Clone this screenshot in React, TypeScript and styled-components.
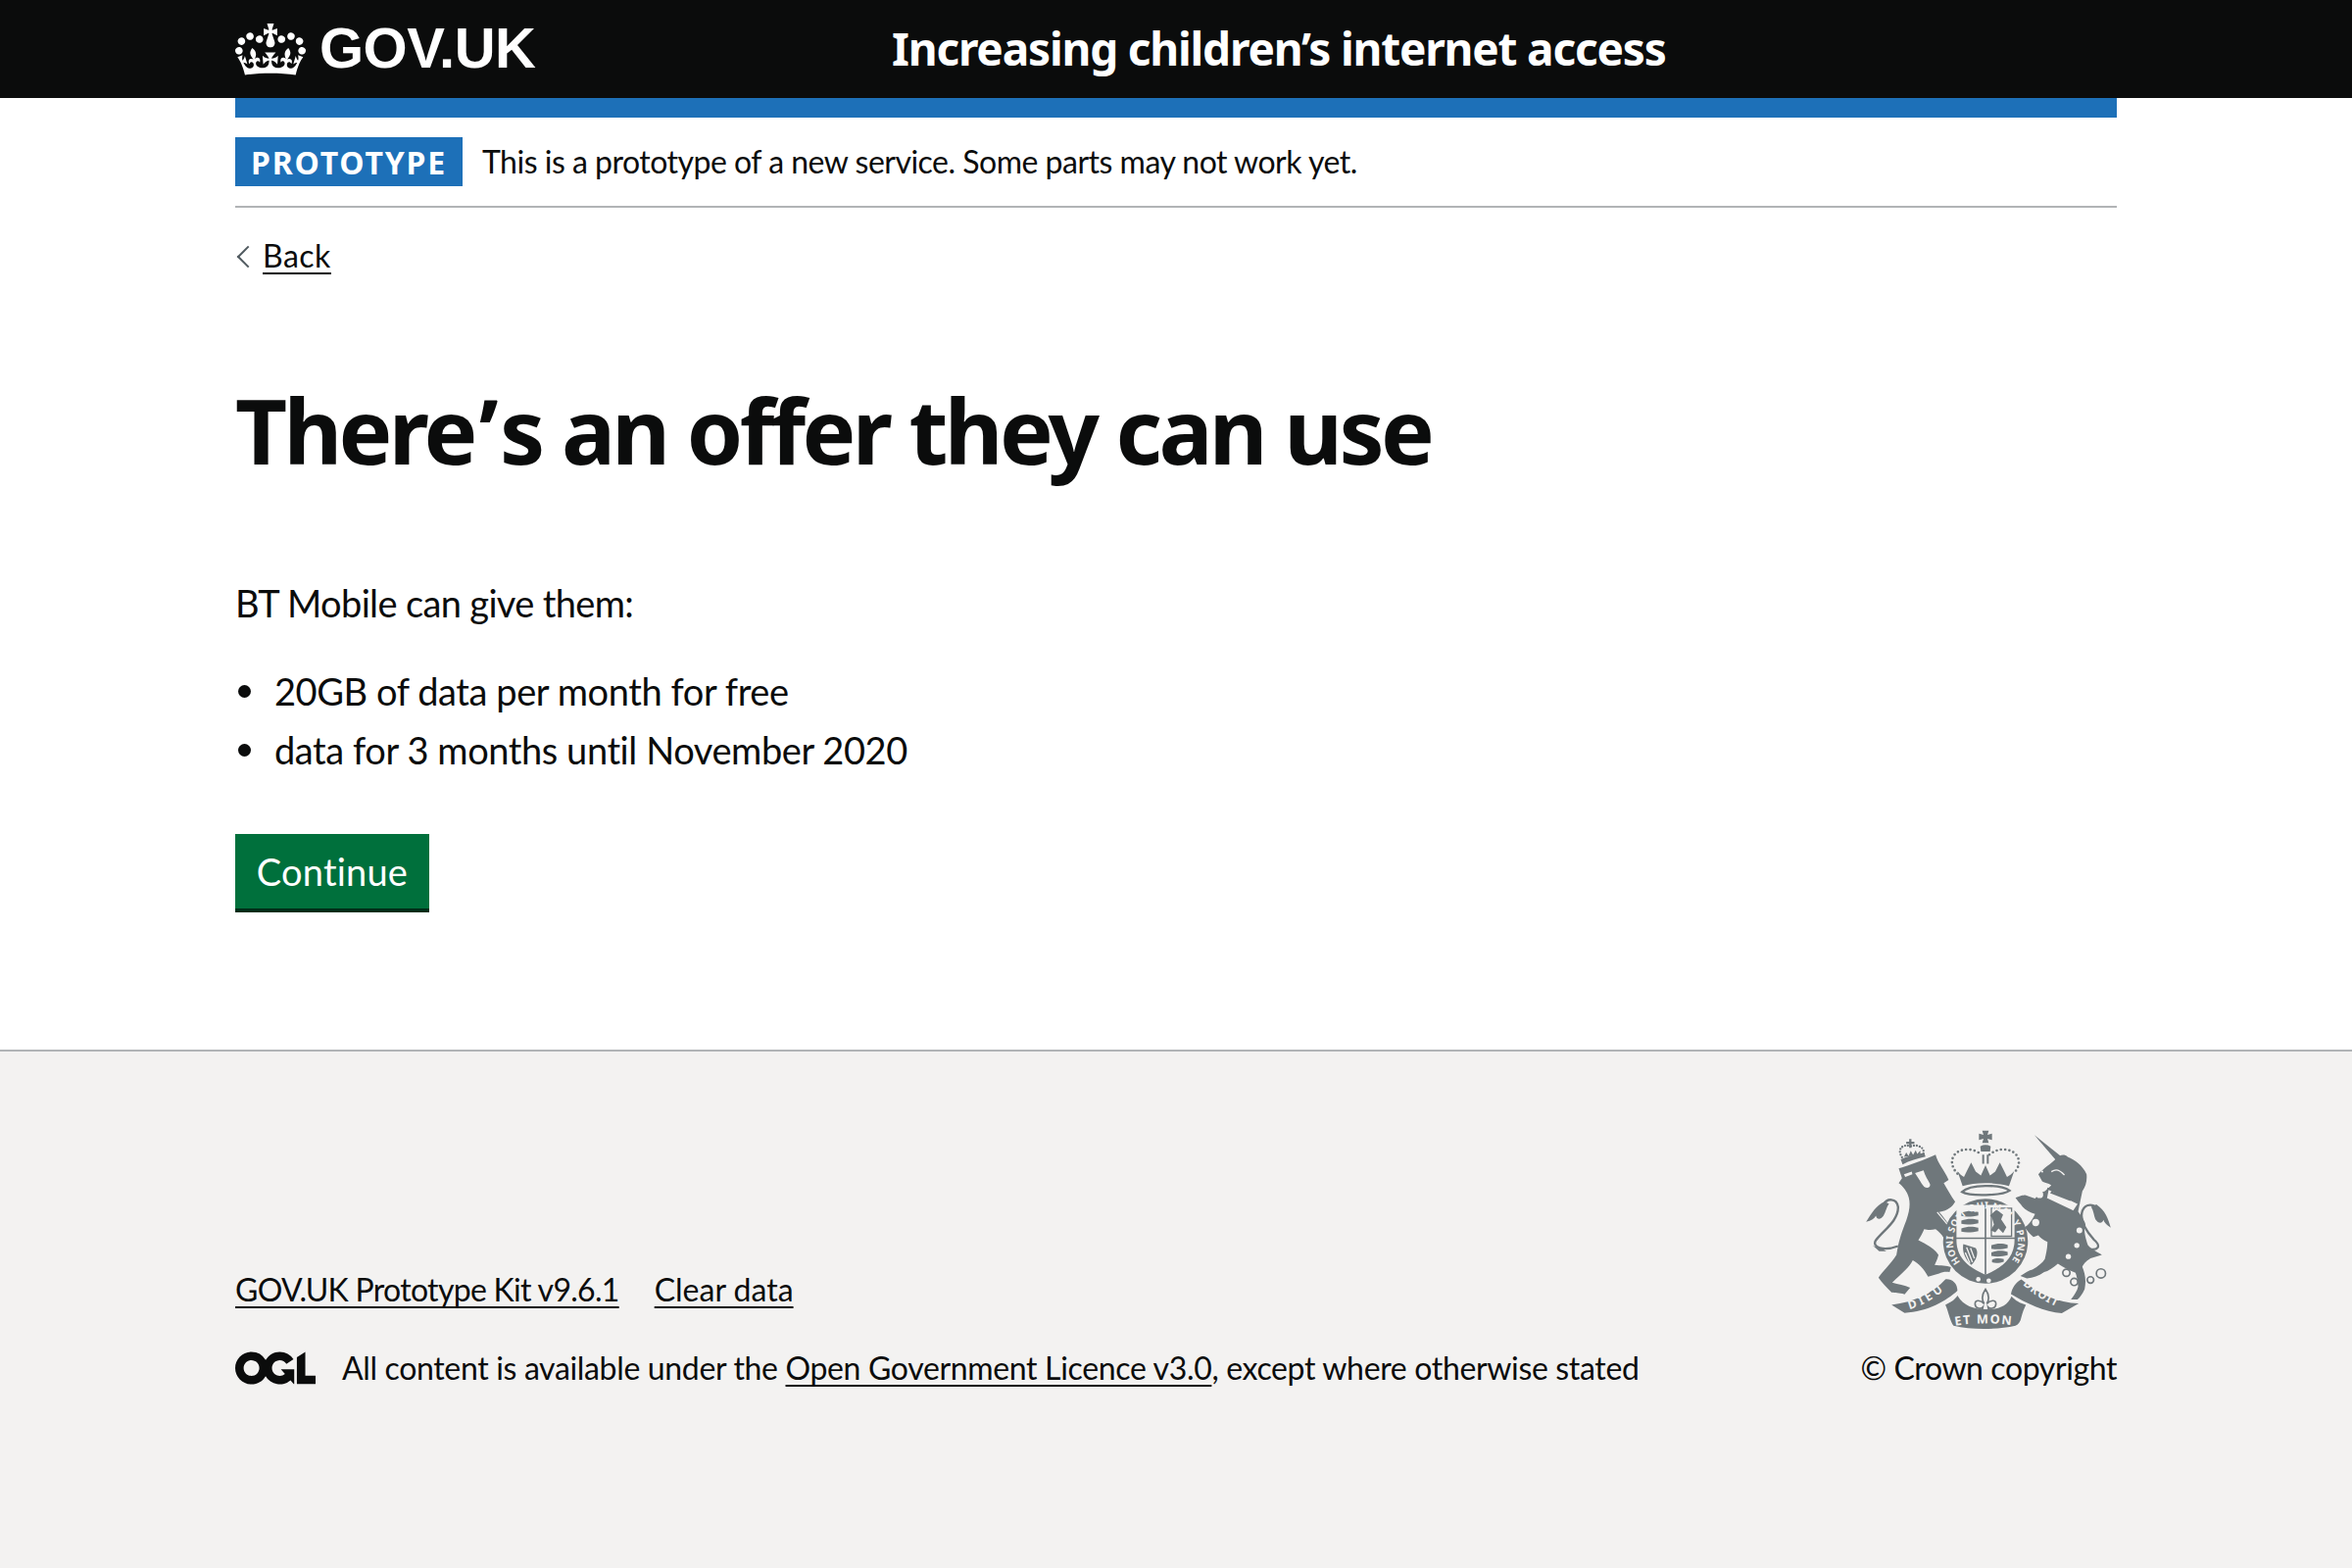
import React from 'react';
import styled, { createGlobalStyle } from 'styled-components';

const FONT = 'Lato, "Noto Sans", Arial, sans-serif';
const BOLD_FONT = '"Noto Sans", Arial, sans-serif';
const CREST = '#6f777b';
const FOOTER_BG = '#f3f2f1';

const GlobalStyle = createGlobalStyle`
  html, body { margin: 0; padding: 0; background: #fff; }
  body { font-family: ${FONT}; color: #0b0c0c; font-variant-ligatures: none; }
`;

const Page = styled.div`
  display: flex;
  flex-direction: column;
  height: 1600px;
  overflow: hidden;
`;

const Header = styled.header`
  background: #0b0c0c;
  height: 100px;
`;

const Container = styled.div`
  width: 1920px;
  margin: 0 auto;
`;

const HeaderInner = styled(Container)`
  display: flex;
  align-items: center;
  height: 100px;
`;

const Logo = styled.a`
  display: flex;
  align-items: center;
  width: 670px;
  color: #fff;
  font-size: 58px;
  font-weight: 700;
  font-family: "Liberation Sans", Arial, sans-serif;
  letter-spacing: -0.5px;
  span { margin-top: -3px; }
  svg { margin-right: 14px; }
`;

const ServiceName = styled.div`
  color: #fff;
  font-family: ${BOLD_FONT};
  font-size: 46px;
  font-weight: 700;
  letter-spacing: -1.2px;
  margin-top: -2px;
  white-space: nowrap;
`;

const BlueBar = styled.div`
  height: 20px;
  background: #1d70b8;
`;

const PhaseBanner = styled.div`
  display: flex;
  align-items: center;
  height: 90px;
  border-bottom: 2px solid #b1b4b6;
  box-sizing: content-box;
`;

const Tag = styled.strong`
  display: flex;
  align-items: center;
  justify-content: center;
  width: 232px;
  height: 50px;
  background: #1d70b8;
  color: #fff;
  font-family: ${BOLD_FONT};
  font-size: 32px;
  font-weight: 700;
  letter-spacing: 1.8px;
  margin-right: 20px;
`;

const PhaseText = styled.span`
  font-size: 32px;
  letter-spacing: -0.5px;
  padding-bottom: 2px;
`;

const BackLink = styled.a`
  position: relative;
  display: inline-block;
  margin-top: 27px;
  padding-left: 28px;
  font-size: 32px;
  line-height: 44px;
  letter-spacing: 0.5px;
  &::before {
    content: '';
    position: absolute;
    left: 5px;
    top: 15px;
    width: 14px;
    height: 14px;
    border-left: 2px solid #505a5f;
    border-bottom: 2px solid #505a5f;
    transform: rotate(45deg);
  }
  span { text-decoration: underline; text-decoration-thickness: 2px; text-underline-offset: 5px; }
`;

const Heading = styled.h1`
  margin: 96px 0 0;
  font-family: ${BOLD_FONT};
  font-size: 92px;
  line-height: 120px;
  font-weight: 700;
  letter-spacing: -3.65px;
  span { margin: 0 5px; }
`;

const Body = styled.p`
  margin: 91px 0 0;
  font-size: 38px;
  line-height: 50px;
  letter-spacing: -0.65px;
`;

const BulletList = styled.ul`
  margin: 40px 0 0;
  padding: 0 0 0 40px;
  list-style: none;
  font-size: 38px;
  line-height: 50px;
  letter-spacing: -0.42px;
`;

const Bullet = styled.li`
  position: relative;
  margin-bottom: 10px;
  &::before {
    content: '';
    position: absolute;
    left: -37px;
    top: 19px;
    width: 13px;
    height: 13px;
    border-radius: 50%;
    background: #0b0c0c;
  }
`;

const Button = styled.button`
  display: block;
  margin-top: 61px;
  width: 198px;
  height: 76px;
  padding: 0;
  border: 0;
  background: #00703c;
  box-shadow: 0 4px 0 #002d18;
  color: #fff;
  font-family: ${FONT};
  font-size: 38px;
  font-variant-ligatures: none;
  letter-spacing: 0.2px;
  margin-bottom: 144px;
`;

const Footer = styled.footer`
  flex: 1;
  background: ${FOOTER_BG};
  border-top: 2px solid #b1b4b6;
`;

const FooterInner = styled(Container)`
  display: flex;
  justify-content: space-between;
  align-items: flex-end;
  padding-top: 76px;
`;

const FooterMeta = styled.div`
  font-size: 32px;
  line-height: 42px;
`;

const FooterLinks = styled.div`
  display: flex;
  gap: 36px;
  margin-bottom: 38px;
`;

const FooterLink = styled.a<{ $tracking?: number }>`
  letter-spacing: ${p => p.$tracking ?? -0.34}px;
  text-decoration: underline;
  text-decoration-thickness: 2px;
  text-underline-offset: 5px;
`;

const Licence = styled.div`
  display: flex;
  align-items: center;
  gap: 27px;
  letter-spacing: -0.34px;
`;

const CopyrightBlock = styled.div`
  display: flex;
  flex-direction: column;
  align-items: flex-end;
  font-size: 32px;
  line-height: 42px;
  letter-spacing: -0.4px;
  svg { display: block; margin-bottom: 13px; }
`;

const CrownLogo = () => (
  <svg width="72" height="53" viewBox="0 0 132 97" fill="#fff" aria-hidden="true">
    <path d="M25 30.2c3.5 1.5 7.7-.2 9.1-3.7 1.5-3.6-.2-7.8-3.9-9.2-3.6-1.4-7.6.3-9.1 3.9-1.4 3.5.3 7.5 3.9 9zM9 39.5c3.6 1.5 7.8-.2 9.2-3.7 1.5-3.6-.2-7.8-3.9-9.1-3.6-1.5-7.6.2-9.1 3.8-1.4 3.5.3 7.5 3.8 9zM4.4 57.2c3.5 1.5 7.7-.2 9.1-3.8 1.5-3.6-.2-7.7-3.9-9.1-3.5-1.5-7.6.3-9.1 3.8-1.4 3.5.3 7.6 3.9 9.1zm38.3-21.4c3.5 1.5 7.7-.2 9.1-3.8 1.5-3.6-.2-7.7-3.9-9.1-3.6-1.5-7.6.3-9.1 3.8-1.3 3.6.4 7.7 3.9 9.1zm64.4-5.6c-3.6 1.5-7.8-.2-9.1-3.7-1.5-3.6.2-7.8 3.8-9.2 3.6-1.4 7.7.3 9.2 3.9 1.3 3.5-.4 7.5-3.9 9zm15.9 9.3c-3.6 1.5-7.7-.2-9.1-3.7-1.5-3.6.2-7.8 3.7-9.1 3.6-1.5 7.7.2 9.2 3.8 1.5 3.5-.3 7.5-3.8 9zm4.7 17.7c-3.6 1.5-7.8-.2-9.2-3.8-1.5-3.6.2-7.7 3.9-9.1 3.6-1.5 7.7.3 9.2 3.8 1.3 3.5-.4 7.6-3.9 9.1zM89.3 35.8c-3.6 1.5-7.8-.2-9.2-3.8-1.4-3.6.2-7.7 3.9-9.1 3.6-1.5 7.7.3 9.2 3.8 1.4 3.6-.3 7.7-3.9 9.1zM69.7 17.7l8.9 4.7V9.3l-8.9 2.8c-.2-.3-.5-.6-.9-.9L72.4 0H59.6l3.5 11.2c-.3.3-.6.5-.9.9l-8.8-2.8v13.1l8.8-4.7c.3.3.6.7.9.9l-5 15.4v.1c-.2.8-.4 1.6-.4 2.4 0 4.1 3.1 7.5 7 8.1h.2c.3 0 .7.1 1 .1.4 0 .7 0 1-.1h.2c4-.6 7.1-4.1 7.1-8.1 0-.8-.1-1.7-.4-2.4V34l-5.1-15.4c.4-.2.7-.6 1-.9zM66 92.8c16.9 0 32.8 1.1 47.1 3.2 4-16.9 8.9-26.7 14-33.5l-9.6-3.4c1 4.9 1.1 7.2 0 10.2-1.5-1.4-3-4.3-4.2-8.7L108.6 76c2.8-2 5-3.2 7.5-3.3-4.4 9.4-10 11.9-13.6 11.2-4.3-.8-6.3-4.6-5.6-7.9 1-4.7 5.7-5.9 8-.5 4.3-8.7-3-11.4-7.6-8.8 7.1-7.2 7.9-13.5 2.1-21.1-8 6.1-8.1 12.3-4.5 20.8-4.7-5.4-12.1-2.5-9.5 6.2 3.4-5.2 7.9-2 7.2 3.1-.6 4.3-6.4 7.8-13.5 7.2-10.3-.9-10.9-8-11.2-13.8 2.5-.5 7.1 1.8 11 7.3L80.2 60c-4.1 4.4-8 5.3-12.3 5.4 1.4-4.4 8-11.6 8-11.6H55.5s6.4 7.2 7.9 11.6c-4.2-.1-8-1-12.3-5.4l1.4 16.4c3.9-5.5 8.5-7.7 10.9-7.3-.3 5.8-.9 12.8-11.1 13.8-7.2.6-12.9-2.9-13.5-7.2-.7-5 3.8-8.3 7.1-3.1 2.7-8.7-4.6-11.6-9.4-6.2 3.7-8.5 3.6-14.7-4.6-20.8-5.8 7.6-5 13.9 2.2 21.1-4.7-2.6-11.9.1-7.7 8.8 2.3-5.5 7.1-4.2 8.1.5.7 3.3-1.3 7.1-5.7 7.9-3.5.7-9-1.8-13.5-11.2 2.5.1 4.7 1.3 7.5 3.3l-4.7-15.4c-1.2 4.4-2.7 7.2-4.3 8.7-1.1-3-.9-5.3 0-10.2l-9.5 3.4c5 6.9 9.9 16.7 14 33.5 14.8-2.1 30.8-3.2 47.7-3.2z" />
  </svg>
);

const OglLogo = () => (
  <svg width="82" height="34" viewBox="0 0 483.2 195.7" fill="#0b0c0c" aria-hidden="true">
    <path d="M421.5 142.8V.1l-50.7 32.3v161.1h112.4v-50.7zm-122.3-9.6A47.12 47.12 0 0 1 221 97.8c0-26 21.1-47.1 47.1-47.1 16.7 0 31.4 8.7 39.7 21.8l42.7-27.2A97.63 97.63 0 0 0 268.1 0c-36.5 0-68.3 20.1-85.1 49.7A98 98 0 0 0 97.8 0C43.9 0 0 43.9 0 97.8s43.9 97.8 97.8 97.8c36.5 0 68.3-20.1 85.1-49.7a97.76 97.76 0 0 0 149.6 25.4l19.4 22.2h3v-87.8h-80l24.3 27.5zM97.8 145c-26 0-47.1-21.1-47.1-47.1s21.1-47.1 47.1-47.1 47.2 21 47.2 47S123.8 145 97.8 145" />
  </svg>
);

// royal arms, coordinates follow a 3x crop of the reference
const Crest = () => (
  <svg width="260" height="213" viewBox="60 30 780 640" fill={CREST} aria-hidden="true">
    <defs>
      <path id="garter" d="M361 447 A100 100 0 1 1 515 447" />
      <path id="ribbon-left" d="M205 592 C250 580 290 552 322 524" />
      <path id="ribbon-mid" d="M345 642 Q435 628 530 642" />
      <path id="ribbon-right" d="M552 516 C585 548 625 570 672 592" />
    </defs>

    {/* lion crown */}
    <path d="M182 126 C165 100 185 84 208 92 C232 84 256 98 246 120" fill="none" stroke={CREST} strokeWidth="7" strokeDasharray="0 9" strokeLinecap="round" />
    <path d="M204 70h7v8h9v7h-9v12h-7V85h-9v-7h9z" />
    <path d="M178 132 C200 122 225 118 250 112 L254 124 C230 130 205 136 184 148z" />
    <path d="M188 125 l7-14 7 11 7-16 7 13 8-15 5 12 9-11 1 14z" />

    {/* lion */}
    <path d="M172 160 C205 150 250 135 285 118 C292 145 312 165 325 195 L310 205 C322 225 332 245 345 262 C335 278 325 288 296 294 C315 315 338 345 346 398 L326 405 C320 385 305 360 285 346 C270 350 258 348 250 346 C245 358 238 370 232 380 C255 392 282 405 294 425 C290 440 285 450 282 456 C300 458 320 458 332 463 L328 478 C315 476 305 478 296 482 L262 492 C250 470 232 450 215 442 C205 462 185 480 152 510 C170 515 190 518 207 526 L190 546 C172 540 160 542 150 540 C135 525 120 510 110 495 C118 480 150 450 165 425 C170 395 175 370 195 320 C205 290 208 270 203 250 C198 230 185 215 172 205 L182 190z" />
    <path d="M222 174 L248 166 C252 182 262 196 268 208 C270 220 258 222 250 216 C240 205 232 188 222 174z" fill={FOOTER_BG} />
    <path d="M188 178 L212 170 L214 178 L192 186z" fill={FOOTER_BG} />
    <path d="M290 294 L338 352" stroke={FOOTER_BG} strokeWidth="4" fill="none" />
    <path d="M170 398 C125 415 88 402 102 380 C125 350 172 320 170 278 C166 250 135 250 125 272" fill="none" stroke={CREST} strokeWidth="7" />
    <path d="M128 262 C104 272 88 298 72 324 C88 320 98 314 102 305 C104 316 115 320 125 306 C132 294 134 280 142 268z" />
    <path d="M92 396 C108 404 122 404 134 414 L112 414z" />

    {/* royal crown */}
    <path d="M428 44h20l-4 13 14-4v20l-14-4 4 13h-20l4-13-14 4V53l14 4z" />
    <path d="M422 92 Q438 84 454 92 L452 108 H424z" />
    <path d="M428 118h6v28h-6zM442 118h6v28h-6z" />
    <path d="M352 176 C318 140 340 100 385 102 C400 102 415 108 425 118 M450 118 C462 108 476 102 490 102 C535 100 558 140 524 176" fill="none" stroke={CREST} strokeWidth="8" strokeDasharray="0 13" strokeLinecap="round" />
    <path d="M352 168 C358 176 364 182 372 186 L380 170 L394 142 L408 170 L424 182 L438 150 L452 182 L468 170 L482 142 L496 170 L504 186 C512 182 520 176 526 168 L510 214 C470 202 405 202 368 214z" />
    <path d="M366 232 C390 208 485 208 512 228 C490 244 390 246 366 232z" fill={FOOTER_BG} stroke={CREST} strokeWidth="7" />

    {/* garter and shield */}
    <circle cx="438" cy="383" r="130" />
    <path d="M349 272 H527 V380 C527 440 480 468 438 486 C396 468 349 440 349 380z" fill={FOOTER_BG} />
    <g>
      <path d="M364 296c20-8 38-6 52-2v10c-16 4-36 6-52 2zM364 320c20-8 38-6 52-2v10c-16 4-36 6-52 2zM364 344c20-8 38-6 52-2v10c-16 4-36 6-52 2z" />
      <path d="M456 396c18-8 36-6 50-2v10c-14 4-34 6-50 2zM456 418c18-8 36-6 50-2v10c-14 4-34 6-50 2zM458 440c14-6 26-4 36-2v8c-10 4-26 6-36 2z" />
      <path d="M472 286 l20 16 -6 14 16 24 -10 18 -14 -14 -10 12 -14 -6 10 -18 -6 -20 -6 -8z" />
      <path d="M456 282h62v86h-62z" fill="none" stroke={CREST} strokeWidth="4" />
      <path d="M370 392 L408 404 C418 420 410 440 395 456 C375 440 366 415 370 392z" />
      <path d="M380 402 L398 448 M392 404 L404 436 M376 418 L390 450" stroke={FOOTER_BG} strokeWidth="4" fill="none" />
    </g>
    <path d="M345 374 H531 M438 270 V486" stroke={CREST} strokeWidth="5" fill="none" />
    <text fill={FOOTER_BG} fontFamily={BOLD_FONT} fontWeight="700" fontSize="29">
      <textPath href="#garter" textLength="445">HONI SOIT QUI MAL Y PENSE</textPath>
    </text>
    <circle cx="416" cy="500" r="7" fill={FOOTER_BG} />
    <circle cx="448" cy="504" r="7" fill={FOOTER_BG} />

    {/* unicorn */}
    <path d="M588 58 L668 122 L655 136z" />
    <path d="M600 178 C615 160 640 145 655 130 C665 118 680 115 690 125 C712 135 735 150 748 178 C750 200 745 215 735 230 L722 292 C735 310 745 325 745 335 C740 345 740 360 752 395 C765 410 780 415 795 425 L760 436 C745 445 738 455 735 462 C742 480 748 500 742 530 C735 545 728 555 720 562 L700 562 C710 548 720 535 722 522 C720 505 718 490 714 480 C695 472 675 462 660 452 C645 465 630 475 618 478 C600 490 585 496 565 497 L545 490 C560 480 572 472 582 470 C600 460 612 450 620 438 C625 418 628 400 628 385 C615 380 605 372 600 365 L585 370 C575 362 565 350 558 340 C570 335 580 320 590 300 C575 295 560 288 552 278 C545 268 535 258 530 250 C545 244 552 242 560 242 L590 252 C600 240 612 232 620 230 L640 212 C630 205 620 205 612 200z" />
    <path d="M630 222 L724 268 L708 292 L624 252z" fill={FOOTER_BG} stroke={CREST} strokeWidth="5" />
    <path d="M636 236 l8-10 4 8 8-6 4 10 8-6 4 10 8-6 3 10 8-4 3 10 8-2 -4 10z" />
    <g fill={FOOTER_BG}>
      <circle cx="604" cy="240" r="11" />
      <circle cx="592" cy="326" r="11" />
      <circle cx="726" cy="350" r="9" />
      <circle cx="718" cy="396" r="8" />
      <circle cx="692" cy="430" r="8" />
      <circle cx="612" cy="170" r="3" />
    </g>
    <path d="M640 170 C655 160 665 165 680 180" fill="none" stroke={FOOTER_BG} strokeWidth="4" />
    <path d="M738 402 C790 420 792 395 770 378 C745 350 725 320 735 290 C745 265 775 268 785 290" fill="none" stroke={CREST} strokeWidth="7" />
    <path d="M778 270 C805 288 815 315 822 342 C808 332 802 326 800 318 C795 330 785 330 775 316 C770 305 770 290 762 278z" />
    <g fill="none" stroke={CREST} strokeWidth="5">
      <circle cx="686" cy="480" r="11" />
      <circle cx="710" cy="508" r="11" />
      <circle cx="760" cy="502" r="10" />
      <circle cx="792" cy="482" r="14" />
    </g>

    {/* motto ribbons */}
    <path d="M150 578 C220 570 280 540 315 500 C335 498 352 512 352 535 C320 565 260 600 190 603z" />
    <path d="M315 578 C330 572 345 562 352 550 C372 582 400 592 440 592 C480 592 505 582 518 552 C528 564 545 574 562 578 C556 590 552 600 548 616 C545 630 540 638 530 642 C470 655 395 655 340 642 C330 630 325 600 315 578z" />
    <path d="M548 500 C600 545 660 572 724 574 L672 604 C620 600 560 572 516 545 C520 525 530 510 548 500z" />
    <g fill={FOOTER_BG} fontFamily={BOLD_FONT} fontWeight="700">
      <text fontSize="36"><textPath href="#ribbon-left" textLength="118">DIEU</textPath></text>
      <text fontSize="38"><textPath href="#ribbon-mid" textLength="172">ET MON</textPath></text>
      <text fontSize="34"><textPath href="#ribbon-right" textLength="122">DROIT</textPath></text>
    </g>

    {/* fleur */}
    <path d="M438 530 C452 550 448 565 442 575 C452 565 470 560 470 575 C470 590 452 592 446 585 L450 605 H426 L430 585 C424 592 406 590 406 575 C406 560 424 565 434 575 C428 565 424 550 438 530z" fill="none" stroke={CREST} strokeWidth="5" />
  </svg>
);

export default function App() {
  return (
    <Page>
      <GlobalStyle />
      <Header>
        <HeaderInner>
          <Logo>
            <CrownLogo />
            <span>GOV.UK</span>
          </Logo>
          <ServiceName>Increasing children’s internet access</ServiceName>
        </HeaderInner>
      </Header>
      <Container as="main">
        <BlueBar />
        <PhaseBanner>
          <Tag>PROTOTYPE</Tag>
          <PhaseText>This is a prototype of a new service. Some parts may not work yet.</PhaseText>
        </PhaseBanner>
        <BackLink><span>Back</span></BackLink>
        <Heading>There<span>’</span>s an offer they can use</Heading>
        <Body>BT Mobile can give them:</Body>
        <BulletList>
          <Bullet>20GB of data per month for free</Bullet>
          <Bullet>data for 3 months until November 2020</Bullet>
        </BulletList>
        <Button>Continue</Button>
      </Container>
      <Footer>
        <FooterInner>
          <FooterMeta>
            <FooterLinks>
              <FooterLink $tracking={-0.7}>GOV.UK Prototype Kit v9.6.1</FooterLink>
              <FooterLink $tracking={0}>Clear data</FooterLink>
            </FooterLinks>
            <Licence>
              <OglLogo />
              <span>
                All content is available under the <FooterLink>Open Government Licence v3.0</FooterLink>, except where otherwise stated
              </span>
            </Licence>
          </FooterMeta>
          <CopyrightBlock>
            <Crest />
            © Crown copyright
          </CopyrightBlock>
        </FooterInner>
      </Footer>
    </Page>
  );
}
